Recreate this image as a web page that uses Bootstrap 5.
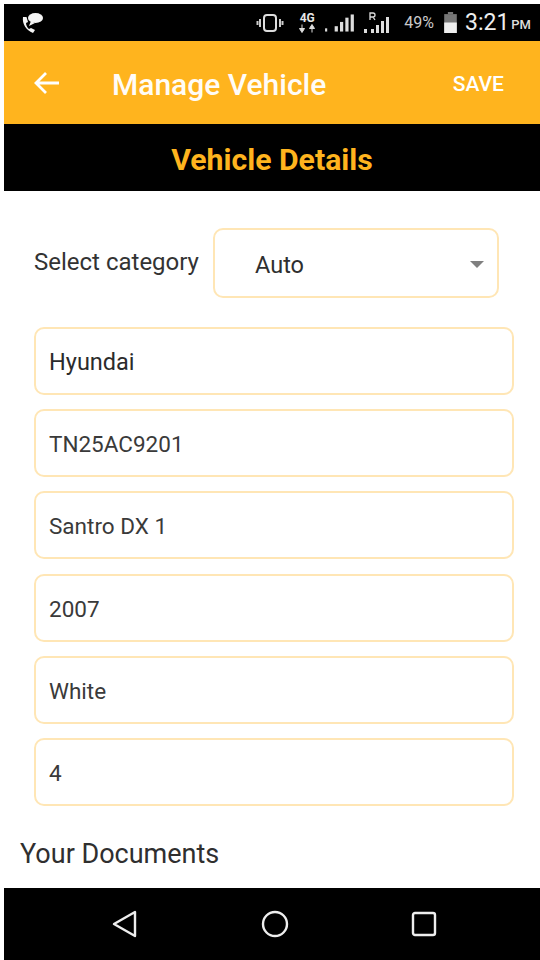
<!DOCTYPE html>
<html lang="en">
<head>
<meta charset="utf-8">
<title>Manage Vehicle</title>
<link href="https://cdn.jsdelivr.net/npm/bootstrap@5.3.0/dist/css/bootstrap.min.css" rel="stylesheet">
<style>
html,body{height:960px;overflow:hidden;background:#fff}
body{font-family:Roboto,"Liberation Sans",sans-serif;color:#2b2b2b}
.phone{height:960px;padding:4px 0 0 4px}
.screen{height:956px}
.statusbar{height:37px;background:#000;color:#e6e6e6;padding:0 9px 0 16px}
.status-time{font-size:23px;line-height:1;color:#eee;margin-right:2px}
.status-ampm{font-size:13px;font-weight:500;color:#ddd;margin-top:4px}
.status-pct{font-size:16px;color:#c9c9c9;line-height:1;margin:0 10px 0 11px}
.status-4g{font-size:12px;font-weight:700;line-height:1;width:20px;text-align:center}
.status-group{margin-right:13px}
.status-gap-sm{margin-right:7px}
.status-bat{margin-right:8px}
.appbar{height:83px;background:#ffb41e;color:#fff;padding:0 36px 0 30px}
.appbar-title{font-size:30px;font-weight:500;margin-left:52px;line-height:1;padding-top:5px;opacity:.97}
.appbar-save{font-size:21px;font-weight:500;line-height:1;padding-top:4px}
.subhead{height:67px;background:#000;color:#ffb41e;font-size:30.200px;font-weight:700;padding-top:5px}
.content{padding:37px 26px 0 30px}
.select-row{padding-right:15px;margin-bottom:29px}
.select-label{font-size:24px;color:#333;width:179px;margin-bottom:3px;line-height:1}
.vehicle-select{height:70px;flex:1;border:2.5px solid #ffe6b5;border-radius:10px;padding:5px 13px 0 40px;font-size:23.500px;color:#2f2f2f}
.select-caret{width:0;height:0;border-left:7px solid transparent;border-right:7px solid transparent;border-top:7px solid #808080;margin-bottom:2px}
.fields{gap:14.200px}
.vehicle-input.form-control{height:68px;flex:none;border:2.5px solid #ffe6b5;border-radius:10px;padding:2px 14px 0 13px;font-size:22.500px;color:#3a3a3a;background:#fff;box-shadow:none}
.vehicle-input.first-field{font-size:23.500px;color:#2b2b2b}
.docs-title{font-size:27px;color:#2f2f2f;margin:32px 0 0 -14px;line-height:1.2}
.navbar-bottom{height:72px;background:#000}
.bottom-spacer{flex:1}
.bottom-icons{padding:0 103px 0 107px}
</style>
</head>
<body>
<div class="phone">
<div class="screen d-flex flex-column">
  <div class="statusbar d-flex align-items-center">
    <svg width="26" height="24" viewBox="0 0 26 24" aria-hidden="true"><ellipse cx="15.500" cy="7" rx="7.500" ry="5" fill="#f4f4f4"/><path d="M11 10l-2 5 6-3z" fill="#f4f4f4"/><path d="M3 6c-1 7 3 13 10 16l2-3-4-2-2 1c-1.500-1-3-3.500-3-6l2-1-1.500-5z" fill="#f4f4f4"/></svg>
    <div class="ms-auto d-flex align-items-center">
      <svg width="28" height="20" viewBox="0 0 28 20" class="status-group" aria-hidden="true"><rect x="8" y="2" width="12" height="16" rx="3" fill="none" stroke="#ddd" stroke-width="2"/><path d="M4 6v8M1.500 8v4M24 6v8M26.500 8v4" stroke="#ccc" stroke-width="2"/></svg>
      <div class="d-flex flex-column align-items-center status-gap-sm"><span class="status-4g">4G</span><svg width="18" height="9" viewBox="0 0 18 8" aria-hidden="true"><path d="M4 0v4M1.500 4h5L4 8zM14 8V4M11.500 4h5L14 0z" stroke="#ddd" fill="#ddd"/></svg></div>
      <svg width="32" height="22" viewBox="0 0 30 20" class="status-gap-sm" aria-hidden="true"><g fill="#ddd"><rect x="1" y="15" width="2" height="3"/><rect x="10" y="13" width="3" height="5"/><rect x="15" y="9" width="3" height="9"/><rect x="20" y="5" width="3" height="13"/><rect x="25" y="2" width="3" height="16"/></g></svg>
      <svg width="30" height="28" viewBox="0 0 30 26" aria-hidden="true"><g fill="#ddd"><rect x="1" y="19" width="3" height="4"/><rect x="8" y="19" width="3" height="4"/><rect x="13" y="15" width="3" height="8"/><rect x="18" y="11" width="3" height="12"/><rect x="23" y="7" width="3" height="16"/></g><path d="M7 10V3h3a2 2 0 0 1 0 4H7m3 0l2 3" stroke="#ddd" stroke-width="1.300" fill="none"/></svg>
      <span class="status-pct">49%</span>
      <svg width="13" height="21" viewBox="0 0 12 20" class="status-bat" aria-hidden="true"><rect x="3.500" y="0" width="5" height="2" fill="#777"/><rect x="0" y="2" width="12" height="18" fill="#777"/><rect x="0" y="10" width="12" height="10" fill="#eee"/></svg>
      <span class="status-time">3:21</span><span class="status-ampm">PM</span>
    </div>
  </div>
  <div class="appbar d-flex align-items-center">
    <svg width="26" height="24" viewBox="0 0 26 24" aria-hidden="true"><path d="M25 12H2M12 2L2 12l10 10" fill="none" stroke="#fff" stroke-width="2.800"/></svg>
    <span class="appbar-title">Manage Vehicle</span>
    <span class="appbar-save ms-auto">SAVE</span>
  </div>
  <div class="subhead d-flex align-items-center justify-content-center">Vehicle Details</div>
  <div class="content">
    <div class="select-row d-flex align-items-center">
      <span class="select-label">Select category</span>
      <div class="vehicle-select d-flex align-items-center justify-content-between bg-white">
        <span>Auto</span><span class="select-caret"></span>
      </div>
    </div>
    <div class="fields d-flex flex-column">
      <input class="form-control vehicle-input first-field" value="Hyundai" aria-label="Make">
      <input class="form-control vehicle-input" value="TN25AC9201" aria-label="Registration">
      <input class="form-control vehicle-input" value="Santro DX 1" aria-label="Model">
      <input class="form-control vehicle-input" value="2007" aria-label="Year">
      <input class="form-control vehicle-input" value="White" aria-label="Colour">
      <input class="form-control vehicle-input" value="4" aria-label="Seats">
    </div>
    <div class="docs-title">Your Documents</div>
  </div>
  <div class="bottom-spacer"></div>
  <div class="navbar-bottom d-flex align-items-center justify-content-center">
    <div class="d-flex align-items-center justify-content-between w-100 bottom-icons">
      <svg width="28" height="30" viewBox="0 0 28 30" aria-hidden="true"><path d="M24 3v24L3 15z" fill="none" stroke="#eee" stroke-width="2.400" stroke-linejoin="round"/></svg>
      <svg width="28" height="28" viewBox="0 0 28 28" aria-hidden="true"><circle cx="14" cy="14" r="12" fill="none" stroke="#eee" stroke-width="2.400"/></svg>
      <svg width="26" height="26" viewBox="0 0 26 26" aria-hidden="true"><rect x="2" y="2" width="22" height="22" rx="2" fill="none" stroke="#eee" stroke-width="2.400"/></svg>
    </div>
  </div>
</div>
</div>
<script src="https://cdn.jsdelivr.net/npm/bootstrap@5.3.0/dist/js/bootstrap.bundle.min.js"></script>
</body>
</html>
